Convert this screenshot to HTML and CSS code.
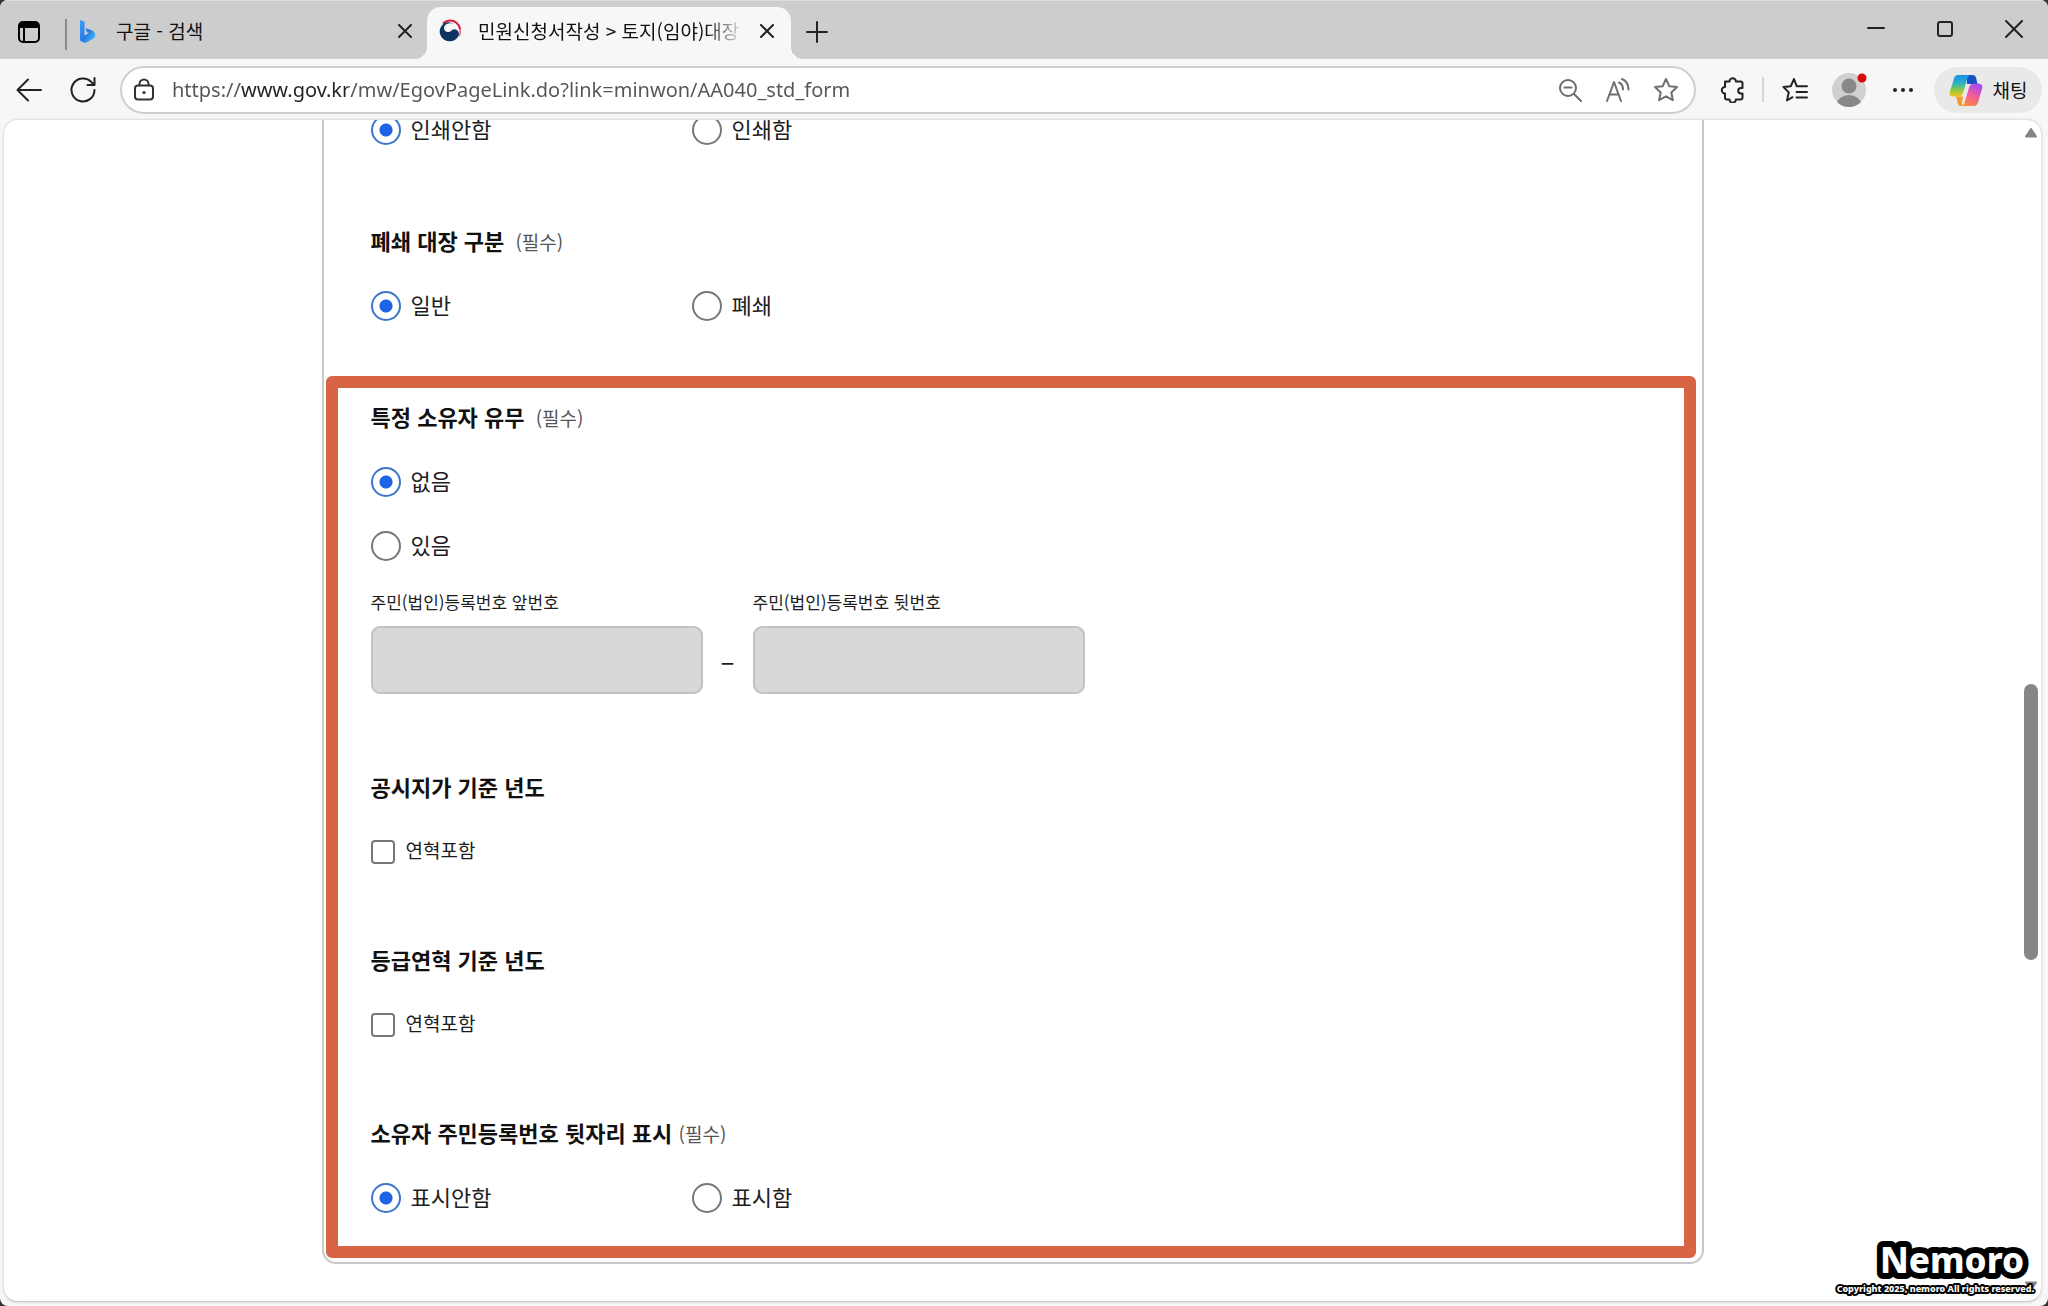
FILE: index.html
```html
<!DOCTYPE html>
<html lang="ko">
<head>
    <meta charset="UTF-8">
    <meta name="viewport" content="width=device-width, initial-scale=1.0">
    <title>민원신청서작성 &gt; 토지(임야)대장</title>
    <link rel="stylesheet" href="styles.css">
</head>
<body>
<div class="window">

    <!-- tabs -->
    <header class="tabbar">
        <button class="tab-menu" aria-label="탭 작업 메뉴">
            <svg width="24" height="24" viewBox="0 0 24 24"><rect x="2" y="2" width="20" height="20" rx="4" fill="none" stroke="#000" stroke-width="2"/><path d="M2 8V6a4 4 0 0 1 4-4h12a4 4 0 0 1 4 4v2z"/><path d="M7 8v14" stroke="#000" stroke-width="2"/></svg>
        </button>
        <span class="tab-line"></span>
        <div class="tab">
            <svg class="tab-icon" viewBox="0 0 22 24">
                <defs><linearGradient id="bing" x1="0" y1="0" x2="1" y2="1"><stop offset="0" stop-color="#3aa0f5"/><stop offset=".55" stop-color="#2a7be8"/><stop offset="1" stop-color="#48cdf5"/></linearGradient></defs>
                <path d="M3 1l4.500 1.600v14L12 14l-2.200-1L8.300 9l7 2.500a5 5 0 0 1 1.700 7.800L9.600 23.400a3.500 3.500 0 0 1-3.300 0L3 21.500z" fill="url(#bing)"/>
            </svg>
            <span class="tab-title">구글 - 검색</span>
            <button class="tab-close" aria-label="탭 닫기"><svg width="14" height="14" viewBox="0 0 14 14"><path d="M1 1l12 12M13 1L1 13"/></svg></button>
        </div>
        <div class="tab active">
            <svg class="tab-icon" viewBox="0 0 22 22">
                <path d="M4 3.500A10 10 0 0 1 19.500 16" fill="none" stroke="#d8173f" stroke-width="2"/>
                <path d="M19.500 16a10 10 0 0 0 1-7" fill="none" stroke="#e79aaa" stroke-width="2"/>
                <path d="M5 3.500C1 6.500 0 11 1.200 14.500a10 10 0 0 0 18.500 1C21 11 16 7 12.500 10.500c-3 3-7.500 1.500-7.500-2.500 0-2.500 2-4 4.500-4.500C12 3 14 3.500 15.500 4.800 12.500 1.500 8 1.500 5 3.500z" fill="#0e3464"/>
            </svg>
            <span class="tab-title">민원신청서작성 &gt; 토지(임야)대장</span>
            <button class="tab-close" aria-label="탭 닫기"><svg width="14" height="14" viewBox="0 0 14 14"><path d="M1 1l12 12M13 1L1 13"/></svg></button>
        </div>
        <button class="tab-new" aria-label="새 탭"><svg width="22" height="22" viewBox="0 0 22 22"><path d="M11 1v20M1 11h20"/></svg></button>
        <div class="win-buttons">
            <button aria-label="최소화"><svg width="18" height="18" viewBox="0 0 18 18"><path d="M1 8h16"/></svg></button>
            <button aria-label="최대화"><svg width="18" height="18" viewBox="0 0 18 18"><rect x="2" y="2" width="14" height="14" rx="2"/></svg></button>
            <button aria-label="닫기"><svg width="18" height="18" viewBox="0 0 18 18"><path d="M1 1l16 16M17 1L1 17"/></svg></button>
        </div>
    </header>

    <!-- address bar -->
    <nav class="toolbar">
        <button class="tool" aria-label="뒤로"><svg width="26" height="24" viewBox="0 0 26 24"><path d="M25 12H2M12 1.500L1.500 12 12 22.500"/></svg></button>
        <button class="tool" aria-label="새로 고침"><svg width="28" height="28" viewBox="0 0 28 28"><path d="M25.500 14A11.500 11.500 0 1 1 22.500 6.200L25 8.500M25.500 2v7h-7"/></svg></button>
        <div class="address">
            <button class="lock" aria-label="사이트 정보"><svg width="22" height="24" viewBox="0 0 22 24"><rect x="2" y="7.500" width="18" height="14" rx="3"/><path d="M6.500 7.500V6a4.500 4.500 0 0 1 9 0v1.500"/><circle cx="11" cy="14.500" r="1.600" fill="#333" stroke="none"/></svg></button>
            <input class="url" type="text" aria-label="주소" value="https://www.gov.kr/mw/EgovPageLink.do?link=minwon/AA040_std_form">
            <button aria-label="축소"><svg width="24" height="24" viewBox="0 0 24 24"><circle cx="10" cy="10" r="8"/><path d="M16 16l7 7M6.500 9.500h7"/></svg></button>
            <button aria-label="소리내어 읽기"><svg width="26" height="26" viewBox="0 0 26 26"><path d="M2 24L9 5l7 19M4.500 17.500h9M14 5.500c2.500 1 4 3.500 4 7M17 2c4 1.500 6.500 5.500 6.500 10.500"/></svg></button>
            <button aria-label="즐겨찾기"><svg width="26" height="26" viewBox="0 0 26 26"><path d="M13 2l3.300 7.200 7.700.9-5.700 5.300 1.600 7.800L13 19.300l-6.900 3.900 1.600-7.800L2 10.100l7.700-.9z"/></svg></button>
        </div>
        <button class="tool ext" aria-label="확장"><svg width="26" height="26" viewBox="0 0 26 26"><path d="M5 4.500h4.500a3.200 3.200 0 0 1 6.400 0h4.600a2 2 0 0 1 2 2V11h-1.500a2.800 2.800 0 0 0 0 5.600h1.500v3.900a2 2 0 0 1-2 2h-4.600a3.200 3.200 0 0 1-6.400 0H7a2 2 0 0 1-2-2v-4a3.200 3.200 0 0 1 0-6.400V6.500a2 2 0 0 1 2-2"/></svg></button>
        <span class="tool-line"></span>
        <button class="tool" aria-label="즐겨찾기 목록"><svg width="26" height="26" viewBox="0 0 26 26"><path d="M16 9.300h-1.200L12 2 8.800 9.200 1.500 10l5.300 5.400L5 23.500l5.500-3.300M16 9.300h9M14.500 15h10.500M14.500 20.500h10.500"/></svg></button>
        <button class="tool" aria-label="프로필"><svg width="40" height="40" viewBox="0 0 40 40"><defs><clipPath id="face"><circle cx="20" cy="20" r="17"/></clipPath></defs><g clip-path="url(#face)" stroke="none"><path d="M0 0h40v40H0z" fill="#d2d0ce"/><circle cx="20" cy="16" r="7.500" fill="#8a8886"/><ellipse cx="20" cy="34" rx="12" ry="9" fill="#8a8886"/></g><circle cx="33" cy="8" r="4.500" fill="#d80b0b" stroke="none"/></svg></button>
        <button class="tool" aria-label="설정 및 기타"><svg width="22" height="6" viewBox="0 0 22 6"><g fill="#222" stroke="none"><circle cx="3" cy="3" r="2"/><circle cx="11" cy="3" r="2"/><circle cx="19" cy="3" r="2"/></g></svg></button>
        <button class="chat">
            <svg width="34" height="32" viewBox="0 0 34 32">
                <defs>
                    <linearGradient id="copA" x1="0" y1="0" x2="0" y2="1"><stop offset="0" stop-color="#1a8fe8"/><stop offset=".4" stop-color="#2fb3c4"/><stop offset=".7" stop-color="#8fc93f"/><stop offset="1" stop-color="#f5c51c"/></linearGradient>
                    <linearGradient id="copB" x1=".7" y1="0" x2=".3" y2="1"><stop offset="0" stop-color="#a64cf0"/><stop offset=".5" stop-color="#ef5b9c"/><stop offset="1" stop-color="#ff8a3c"/></linearGradient>
                </defs>
                <path d="M18 1h5.500c2 0 3 1.200 3.600 3L28.500 10H18z" fill="#1750c4"/>
                <path d="M9 1h13c-2 0-3 1.500-3.600 3.500L14 19c-.7 2-2 3.500-4 3.500H4c-3 0-4-2-3-5L5 4.500C5.600 2.500 7 1 9 1z" fill="url(#copA)"/>
                <path d="M6 22.500h8l-1 6c0 2 1 3.500 3 3.500h-4c-2 0-3-1.500-3.500-3.500C8 25.500 7.500 23 6 22.500z" fill="#f59a2c"/>
                <path d="M25 32H12c2 0 3-1.500 3.600-3.500L20 13.500c.7-2 2-3.800 4-3.800h6c3 0 4 2.300 3 5.300l-4 13.500c-.6 2-2 3.500-4 3.500z" fill="url(#copB)"/>
            </svg>
            채팅
        </button>
    </nav>

    <!-- page -->
    <div class="viewport">
        <main class="page">
            <form class="card">
                <div class="group" role="radiogroup" aria-label="인쇄 여부">
                    <div class="options">
                        <label class="option"><input type="radio" name="print" checked>인쇄안함</label>
                        <label class="option"><input type="radio" name="print">인쇄함</label>
                    </div>
                </div>
                <div class="group" role="radiogroup" aria-labelledby="t1">
                    <h3 class="title" id="t1">폐쇄 대장 구분 <span class="req spaced">(필수)</span></h3>
                    <div class="options">
                        <label class="option"><input type="radio" name="closed" checked>일반</label>
                        <label class="option"><input type="radio" name="closed">폐쇄</label>
                    </div>
                </div>

                <div class="highlight">
                    <div class="section" role="radiogroup" aria-labelledby="t2">
                        <h3 class="title" id="t2">특정 소유자 유무 <span class="req spaced">(필수)</span></h3>
                        <div class="options stacked">
                            <label class="option"><input type="radio" name="owner" checked>없음</label>
                            <label class="option"><input type="radio" name="owner">있음</label>
                        </div>
                        <div class="regno">
                            <div class="field">
                                <label for="no1">주민(법인)등록번호 앞번호</label>
                                <input type="text" id="no1" disabled>
                            </div>
                            <span class="dash">–</span>
                            <div class="field">
                                <label for="no2">주민(법인)등록번호 뒷번호</label>
                                <input type="text" id="no2" disabled>
                            </div>
                        </div>
                    </div>
                    <div class="section">
                        <h3 class="title">공시지가 기준 년도</h3>
                        <label class="option check"><input type="checkbox">연혁포함</label>
                    </div>
                    <div class="section">
                        <h3 class="title">등급연혁 기준 년도</h3>
                        <label class="option check"><input type="checkbox">연혁포함</label>
                    </div>
                    <div class="section" role="radiogroup" aria-labelledby="t5">
                        <h3 class="title" id="t5">소유자 주민등록번호 뒷자리 표시 <span class="req">(필수)</span></h3>
                        <div class="options">
                            <label class="option"><input type="radio" name="show" checked>표시안함</label>
                            <label class="option"><input type="radio" name="show">표시함</label>
                        </div>
                    </div>
                </div>
            </form>
        </main>
        <div class="scroll">
            <svg width="14" height="10" viewBox="0 0 14 10"><path d="M7 1l5 7.500H2z" fill="#858585" stroke="#858585" stroke-width="2" stroke-linejoin="round"/></svg>
            <span class="space-top"></span>
            <span class="thumb"></span>
            <span class="space-bottom"></span>
            <svg width="14" height="10" viewBox="0 0 14 10"><path d="M7 9l5-7.500H2z" fill="#858585" stroke="#858585" stroke-width="2" stroke-linejoin="round"/></svg>
        </div>
    </div>

    <svg class="watermark" width="220" height="66" viewBox="0 0 220 66">
        <text class="brand" x="206" y="39" text-anchor="end">Nemoro</text>
        <text class="copy" x="216" y="58" text-anchor="end">Copyright 2025, nemoro All rights reserved.</text>
    </svg>
</div>
</body>
</html>
```
FILE: styles.css
```css
* {
    box-sizing: border-box;
}

body {
    margin: 0;
    background: #333;
    color: #1d1d1d;
    font-family: "Noto Sans CJK KR", sans-serif;
}

button {
    border: 0;
    padding: 0;
    background: none;
    font-family: inherit;
    display: flex;
    align-items: center;
    justify-content: center;
}

button svg {
    fill: none;
    stroke: #222;
    stroke-width: 2;
    stroke-linecap: round;
    stroke-linejoin: round;
}

.window {
    position: relative;
    height: 100vh;
    display: flex;
    flex-direction: column;
    background: #f7f7f7;
    border-radius: 8px;
    overflow: hidden;
}

/* tabs */
.tabbar {
    display: flex;
    height: 59px;
    background: #cdcdcd;
    border-top: 1px solid #dedede;
}

.tab-menu {
    width: 58px;
    padding-top: 4px;
}

.tab-menu svg {
    fill: #000;
    stroke: none;
}

.tab-line {
    width: 2px;
    height: 31px;
    margin: 18px 0 0 7px;
    background: #8b8b8b;
}

.tab {
    display: flex;
    align-items: center;
    width: 360px;
    height: 52px;
    margin-top: 6px;
    padding: 0 6px 4px 10px;
}

.tab.active {
    position: relative;
    width: 364px;
    padding-left: 12px;
    padding-right: 8px;
    background: #f7f7f7;
    border-radius: 14px 14px 0 0;
}

/* curved feet of the active tab */
.tab.active::before,
.tab.active::after {
    content: "";
    position: absolute;
    bottom: 0;
    width: 12px;
    height: 12px;
}

.tab.active::before {
    left: -12px;
    background: radial-gradient(circle at 0 0, transparent 12px, #f7f7f7 12px);
}

.tab.active::after {
    right: -12px;
    background: radial-gradient(circle at 100% 0, transparent 12px, #f7f7f7 12px);
}

.tab-icon {
    width: 22px;
    height: 24px;
    flex: none;
}

.tab-title {
    flex: 1;
    margin: 0 6px 0 17px;
    overflow: hidden;
    white-space: nowrap;
    font-size: 19px;
    line-height: 28px;
    color: #111;
}

.tab.active .tab-title {
    -webkit-mask-image: linear-gradient(90deg, #000 calc(100% - 40px), transparent);
    mask-image: linear-gradient(90deg, #000 calc(100% - 40px), transparent);
}

.tab-close {
    width: 32px;
    height: 32px;
}

.tab-new {
    width: 52px;
    padding-top: 4px;
}

.win-buttons {
    display: flex;
    height: 56px;
    margin-left: auto;
}

.win-buttons button {
    width: 69px;
}

/* address bar */
.toolbar {
    display: flex;
    align-items: center;
    height: 61px;
    padding: 0 6px 0 2px;
}

.tool {
    width: 54px;
    height: 48px;
}

.address {
    display: flex;
    align-items: center;
    flex: 1;
    height: 48px;
    margin-left: 10px;
    padding-right: 4px;
    border: 2px solid #cfcfcf;
    border-radius: 24px;
    background: #fff;
}

.address button {
    width: 48px;
    height: 40px;
}

.address button svg {
    stroke: #6e6e6e;
}

.address .lock {
    width: 44px;
}

.address .lock svg {
    stroke: #333;
}

.url {
    flex: 1;
    min-width: 0;
    padding: 0 0 0 6px;
    border: 0;
    outline: 0;
    font-family: "Noto Sans", sans-serif;
    font-size: 20px;
    line-height: 30px;
    /* the host name is darker than the rest */
    color: transparent;
    background: linear-gradient(90deg, #555 74px, #222 74px 181px, #555 181px);
    -webkit-background-clip: text;
    background-clip: text;
}

.ext {
    margin-left: 10px;
}

.tool-line {
    width: 2px;
    height: 25px;
    margin: 0 4px 0 2px;
    background: #d4d4d4;
}

.chat {
    width: 108px;
    height: 46px;
    margin-left: 4px;
    gap: 10px;
    border-radius: 23px;
    background: #e9e9e9;
    font-size: 19px;
    color: #111;
}

.chat svg {
    stroke: none;
}

/* page */
.viewport {
    display: flex;
    flex: 1;
    min-height: 0;
    margin: 0 7px 4px 4px;
    background: #fff;
    border-bottom: 1px solid #ccc;
    border-radius: 14px;
    box-shadow: 0 0 3px #bbb;
    overflow: hidden;
}

.page {
    flex: 1;
    padding: 0 20px;
    overflow: hidden;
}

.card {
    max-width: 1382px;
    margin: -5px auto 0;
    padding-bottom: 4px;
    border: 2px solid #c9c9c9;
    border-top: 0;
    border-radius: 0 0 14px 14px;
}

.group {
    margin-bottom: 79px;
    padding-left: 47px;
}

.group:nth-child(2) {
    margin-bottom: 55px;
}

.title {
    margin: 0 0 33px;
    font-size: 22px;
    font-weight: 700;
    line-height: 32px;
    color: #111;
}

.req {
    font-size: 19px;
    font-weight: 400;
    color: #555;
}

.spaced {
    margin-left: 5px;
}

.options {
    display: grid;
    grid-template-columns: 321px 321px;
}

.options.stacked {
    grid-template-columns: 321px;
    row-gap: 34px;
}

.option {
    display: flex;
    align-items: flex-start;
    gap: 10px;
    height: 30px;
    font-size: 22px;
    line-height: 26px;
}

.option input {
    appearance: none;
    flex: none;
    margin: 0;
    border: 2px solid #777;
    background: #fff;
}

.option input[type="radio"] {
    width: 30px;
    height: 30px;
    border-radius: 50%;
}

.option input[type="radio"]:checked {
    border-color: #3f74cc;
    background: radial-gradient(circle, #1f63e6 6px, #fff 7px);
}

.option input[type="checkbox"] {
    width: 24px;
    height: 24px;
    border-radius: 4px;
}

.option.check {
    gap: 11px;
    margin-top: 38px;
    height: 27px;
    font-size: 19px;
    line-height: 20px;
}

.highlight {
    margin: 0 6px 0 2px;
    padding: 12px 33px 33px;
    border: 12px solid #d76445;
    border-radius: 6px;
}

.section + .section {
    margin-top: 76px;
}

.regno {
    display: flex;
    align-items: flex-end;
    margin-top: 29px;
}

.field {
    display: flex;
    flex-direction: column;
    gap: 12px;
    width: 332px;
}

.field label {
    font-size: 17px;
    line-height: 24px;
}

.field input {
    height: 68px;
    border: 2px solid #c2c2c2;
    border-radius: 9px;
    background: #d8d8d8;
}

.dash {
    width: 50px;
    font-size: 26px;
    line-height: 68px;
    text-align: center;
}

/* scrollbar */
.scroll {
    display: flex;
    flex-direction: column;
    align-items: center;
    width: 20px;
    padding: 8px 0 10px;
}

.space-top {
    flex: 544;
}

.thumb {
    flex: 274;
    width: 14px;
    border-radius: 7px;
    background: #868686;
}

.space-bottom {
    flex: 320;
}

/* watermark over the page corner */
.watermark {
    position: absolute;
    right: 10px;
    bottom: 6px;
    font-family: "Noto Sans", sans-serif;
    font-weight: 800;
    fill: #fff;
    stroke: #000;
    stroke-linejoin: round;
    paint-order: stroke;
}

.brand {
    font-size: 35px;
    stroke-width: 12px;
}

.copy {
    font-size: 9px;
    stroke-width: 4px;
}
```
